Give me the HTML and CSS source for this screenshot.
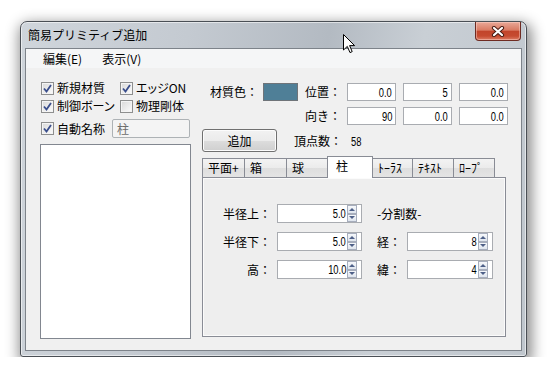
FILE: index.html
```html
<!DOCTYPE html>
<html lang="ja">
<head>
    <meta charset="UTF-8">
    <meta name="viewport" content="width=device-width, initial-scale=1.0">
    <title>簡易プリミティブ追加</title>
    <link rel="stylesheet" href="styles.css">
</head>
<body>
    <div class="window">
        <div class="titlebar">
            <span class="title">簡易プリミティブ追加</span>
            <div class="close">
                <svg width="14" height="11" viewBox="0 0 14 11">
                    <path d="M3 2 L11 9 M11 2 L3 9" stroke="#4a1d14" stroke-width="4.2" stroke-linecap="round"/>
                    <path d="M3 2 L11 9 M11 2 L3 9" stroke="#ffffff" stroke-width="2.2" stroke-linecap="round"/>
                </svg>
            </div>
        </div>

        <div class="client">
            <div class="menubar">
                <span class="menu-item">編集(E)</span>
                <span class="menu-item">表示(V)</span>
            </div>

            <div class="main">
                <!-- 左側: チェックとリスト -->
                <div class="left">
                    <div class="check-row">
                        <span class="check first"><span class="cb on"><svg width="11" height="11" viewBox="0 0 11 11"><polyline points="2,5.5 4.5,8.5 9,2" fill="none" stroke="#3a4e8c" stroke-width="1.8"/></svg></span>新規材質</span>
                        <span class="check"><span class="cb on"><svg width="11" height="11" viewBox="0 0 11 11"><polyline points="2,5.5 4.5,8.5 9,2" fill="none" stroke="#3a4e8c" stroke-width="1.8"/></svg></span>エッジON</span>
                    </div>
                    <div class="check-row">
                        <span class="check first"><span class="cb on"><svg width="11" height="11" viewBox="0 0 11 11"><polyline points="2,5.5 4.5,8.5 9,2" fill="none" stroke="#3a4e8c" stroke-width="1.8"/></svg></span>制御ボーン</span>
                        <span class="check"><span class="cb"></span>物理剛体</span>
                    </div>
                    <div class="check-row name-row">
                        <span class="check"><span class="cb on"><svg width="11" height="11" viewBox="0 0 11 11"><polyline points="2,5.5 4.5,8.5 9,2" fill="none" stroke="#3a4e8c" stroke-width="1.8"/></svg></span>自動名称</span>
                        <div class="textbox disabled">柱</div>
                    </div>
                    <div class="listbox"></div>
                </div>

                <!-- 右側: 設定とタブ -->
                <div class="right">
                    <div class="props">
                        <span class="plabel first">材質色：</span>
                        <span class="swatch"></span>
                        <span class="plabel">位置：</span>
                        <div class="field"><span class="digits">0.0</span></div>
                        <div class="field"><span class="digits">5</span></div>
                        <div class="field"><span class="digits">0.0</span></div>

                        <span class="plabel col3">向き：</span>
                        <div class="field"><span class="digits">90</span></div>
                        <div class="field"><span class="digits">0.0</span></div>
                        <div class="field"><span class="digits">0.0</span></div>
                    </div>

                    <div class="add-row">
                        <div class="btn">追加</div>
                        <span class="vcount">頂点数：<span class="digits num">58</span></span>
                    </div>

                    <div class="tabs">
                        <span class="tab w43">平面+</span>
                        <span class="tab w43">箱</span>
                        <span class="tab w42">球</span>
                        <span class="tab active">柱</span>
                        <span class="tab w41">ﾄｰﾗｽ</span>
                        <span class="tab w42">ﾃｷｽﾄ</span>
                        <span class="tab w42">ﾛｰﾌﾟ</span>
                    </div>
                    <div class="tab-panel">
                        <div class="form">
                            <span class="flabel">半径上：</span>
                            <div class="spin"><span class="val"><span class="digits">5.0</span></span><span class="arrows"><span class="up"></span><span class="dn"></span></span></div>
                            <span></span>
                            <span class="group">-分割数-</span>

                            <span class="flabel">半径下：</span>
                            <div class="spin"><span class="val"><span class="digits">5.0</span></span><span class="arrows"><span class="up"></span><span class="dn"></span></span></div>
                            <span></span>
                            <span class="slabel">経：</span>
                            <div class="spin"><span class="val"><span class="digits">8</span></span><span class="arrows"><span class="up"></span><span class="dn"></span></span></div>

                            <span class="flabel">高：</span>
                            <div class="spin"><span class="val"><span class="digits">10.0</span></span><span class="arrows"><span class="up"></span><span class="dn"></span></span></div>
                            <span></span>
                            <span class="slabel">緯：</span>
                            <div class="spin"><span class="val"><span class="digits">4</span></span><span class="arrows"><span class="up"></span><span class="dn"></span></span></div>
                        </div>
                    </div>
                </div>
            </div>
        </div>
    </div>

    <!-- マウスカーソル -->
    <svg class="cursor" width="13" height="20" viewBox="0 0 13 20">
        <path d="M0.5 0.5 L0.5 16 L4.3 12.4 L7 18.6 L9.2 17.6 L6.6 11.6 L11.6 11.6 Z" fill="#ffffff" stroke="#000000" stroke-width="1"/>
    </svg>
</body>
</html>
```

FILE: styles.css
```css
/* ウィンドウ全体 */
body {
    margin: 0;
    background: #ffffff;
    font-family: "Noto Sans CJK JP", sans-serif;
    font-size: 12px;
    color: #000000;
}

.window {
    margin: 21px 0 0 20px;
    width: 507px;
    height: 336px;
    box-sizing: border-box;
    border: 1px solid #4a4f55;
    border-radius: 7px 7px 3px 3px;
    padding: 0 4px 5px;
    display: flex;
    flex-direction: column;
    background: linear-gradient(100deg, #cfd5db 0%, #c4cad1 30%, #b3bac2 55%, #c9cfd5 72%, #bfc6cd 100%);
    box-shadow: 2px 5px 14px 3px rgba(0, 0, 0, 0.45), inset 0 0 0 1px rgba(255, 255, 255, 0.55);
}

.titlebar {
    height: 26px;
    display: flex;
    align-items: flex-start;
}

.title {
    margin: 4px 0 0 3px;
    line-height: 17px;
}

.close {
    margin-left: auto;
    margin-right: 1px;
    width: 46px;
    height: 19px;
    box-sizing: border-box;
    border: 1px solid #6e2b22;
    border-top: none;
    border-radius: 0 0 4px 4px;
    background: linear-gradient(#e9a898 0%, #d97b63 45%, #c2452b 52%, #c64b30 78%, #dd7e66 100%);
    box-shadow: inset 0 0 0 1px rgba(255, 220, 210, 0.45);
    display: flex;
    align-items: center;
    justify-content: center;
}

.client {
    flex: 1;
    min-height: 0;
    border: 1px solid #7d838a;
    background: #f0f0f0;
    display: flex;
    flex-direction: column;
}

/* メニューバー */
.menubar {
    height: 19px;
    background: #f5f6f7;
    display: flex;
    padding-left: 7px;
}

.menu-item {
    padding: 0 10px;
    line-height: 19px;
}

.main {
    flex: 1;
    min-height: 0;
    display: flex;
    padding: 11px 0 0 14px;
}

/* 左側 */
.left {
    width: 151px;
    display: flex;
    flex-direction: column;
}

.check-row {
    height: 18px;
    display: flex;
    align-items: center;
}

.name-row {
    height: 19px;
    margin-top: 4px;
}

.check {
    display: flex;
    align-items: center;
    font-feature-settings: "palt";
    line-height: 18px;
}

.check.first {
    width: 79px;
}

.cb {
    width: 13px;
    height: 13px;
    margin: 0 3px 0 1px;
    box-sizing: border-box;
    border: 1px solid #8e8f8f;
    background: linear-gradient(135deg, #d8d8d8, #fdfdfd);
    box-shadow: inset 0 0 0 1px #f4f4f4;
    display: flex;
    align-items: center;
    justify-content: center;
}

.textbox {
    width: 78px;
    height: 19px;
    box-sizing: border-box;
    margin-left: auto;
    margin-right: 1px;
    border: 1px solid #adb2b5;
    border-radius: 2px;
    padding-left: 4px;
    line-height: 17px;
}

.textbox.disabled {
    background: #f4f4f4;
    color: #6d6d6d;
}

.listbox {
    margin-top: 6px;
    height: 195px;
    box-sizing: border-box;
    border: 1px solid #828790;
    background: #ffffff;
}

/* 右側 */
.right {
    margin-left: 11px;
    width: 306px;
    display: flex;
    flex-direction: column;
    padding-top: 4px;
}

.props {
    display: grid;
    grid-template-columns: 61px 42px 42px 49px 56px 56px;
    grid-auto-rows: 18px;
    row-gap: 6px;
    align-items: center;
}

.plabel {
    line-height: 18px;
}

.plabel.first {
    padding-left: 8px;
}

.plabel.col3 {
    grid-column: 3;
}

.swatch {
    width: 35px;
    height: 18px;
    box-sizing: border-box;
    border: 1px solid #6f7479;
    background: #4f7f97;
}

/* 数字は細長いビットマップ風に */
.digits {
    display: inline-block;
    font-family: "Liberation Sans", sans-serif;
    font-size: 12px;
    transform: scaleX(0.78);
    transform-origin: right center;
}

.field {
    justify-self: end;
    width: 49px;
    height: 18px;
    box-sizing: border-box;
    border: 1px solid #a9acb1;
    background: #ffffff;
    text-align: right;
    padding-right: 3px;
    line-height: 16px;
}

.add-row {
    display: flex;
    align-items: center;
    height: 23px;
    margin-top: 4px;
}

.btn {
    width: 75px;
    height: 23px;
    box-sizing: border-box;
    border: 1px solid #707070;
    border-radius: 3px;
    background: linear-gradient(#f2f2f2 0%, #ebebeb 50%, #dddddd 51%, #cfcfcf 100%);
    box-shadow: inset 0 0 0 1px #fcfcfc;
    text-align: center;
    line-height: 21px;
}

.vcount {
    margin-left: 17px;
}

.vcount .num {
    margin-left: 9px;
    transform-origin: left center;
}

/* タブ */
.tabs {
    display: flex;
    align-items: flex-end;
    height: 21px;
    margin-top: 4px;
    position: relative;
    z-index: 1;
}

.tab {
    height: 19px;
    box-sizing: border-box;
    border: 1px solid #898c95;
    border-bottom: none;
    margin-right: -1px;
    padding-left: 5px;
    line-height: 18px;
    background: linear-gradient(#f3f3f3 0%, #ebebeb 50%, #dedede 51%, #e4e4e4 100%);
    font-feature-settings: "palt";
}

.w41 { width: 41px; }
.w42 { width: 42px; }
.w43 { width: 43px; }

.tab.active {
    width: 46px;
    height: 22px;
    margin-bottom: -1px;
    padding-left: 8px;
    background: #ffffff;
    line-height: 18px;
}

.tab-panel {
    width: 304px;
    height: 160px;
    box-sizing: border-box;
    border: 1px solid #898c95;
    background: #eeeeee;
    box-shadow: inset 0 0 0 1px #fbfbfb;
    padding: 26px 0 0 20px;
}

.form {
    display: grid;
    grid-template-columns: 54px 85px 15px 30px 86px;
    grid-auto-rows: 19px;
    row-gap: 9px;
    align-items: center;
}

.flabel {
    text-align: right;
    padding-right: 6px;
}

.group {
    grid-column: 4 / span 2;
}

.spin {
    height: 19px;
    box-sizing: border-box;
    border: 1px solid #a9acb1;
    background: #ffffff;
    display: flex;
    align-items: center;
}

.spin .val {
    flex: 1;
    text-align: right;
    padding-right: 1px;
    line-height: 17px;
}

.arrows {
    width: 10px;
    height: 17px;
    margin-right: 4px;
    display: flex;
    flex-direction: column;
}

.arrows span {
    flex: 1;
    border: 1px solid #a7aebd;
    background: linear-gradient(#f6f8fb, #dfe5ee);
    display: flex;
    align-items: center;
    justify-content: center;
}

.arrows .up::after {
    content: "";
    border-left: 3px solid transparent;
    border-right: 3px solid transparent;
    border-bottom: 3px solid #4e6088;
}

.arrows .dn::after {
    content: "";
    border-left: 3px solid transparent;
    border-right: 3px solid transparent;
    border-top: 3px solid #4e6088;
}

.cursor {
    position: absolute;
    left: 343px;
    top: 34px;
}
```
